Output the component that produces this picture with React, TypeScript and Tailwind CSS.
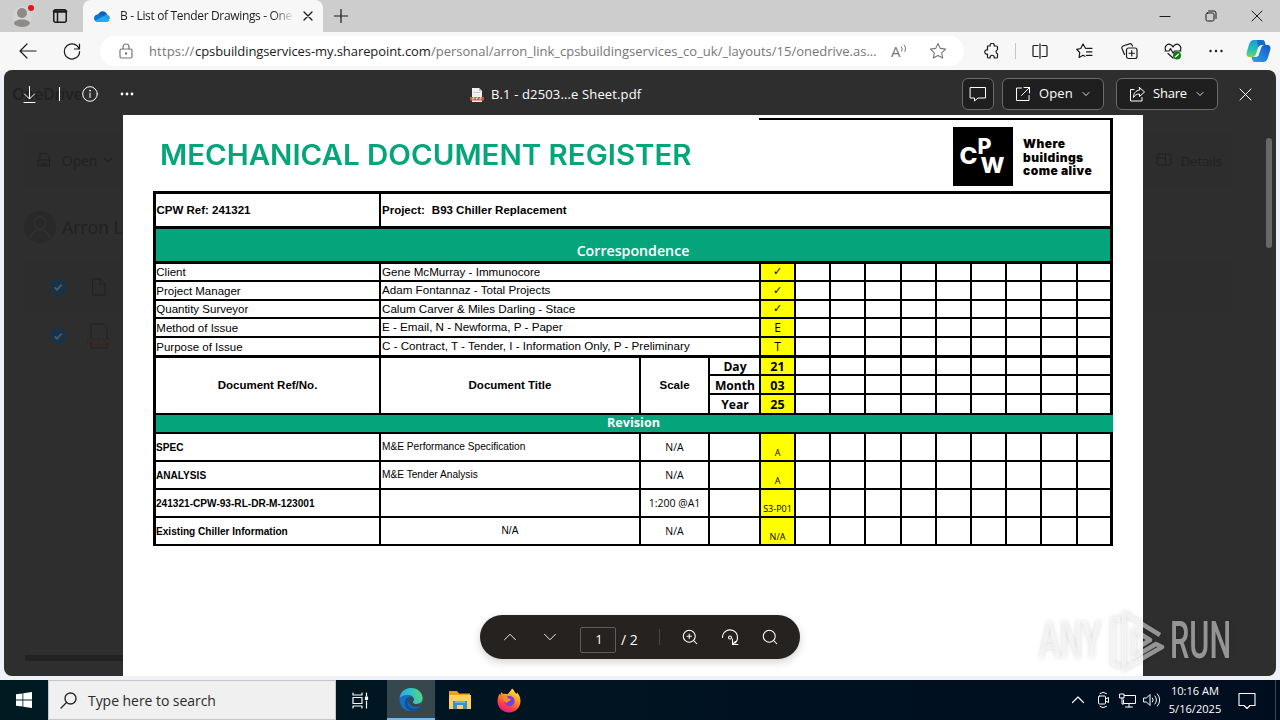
import type { ReactNode } from 'react';
import { ChevronDown, ChevronUp, Search, ZoomIn } from 'lucide-react';

type IconProps = {
  w?: number;
  h?: number;
  sw?: number;
  className?: string;
  children: ReactNode;
};

// Line icon on a viewBox equal to its pixel size
function Icon({ w = 16, h = 16, sw = 1, className = '', children }: IconProps) {
  return (
    <svg
      width={w}
      height={h}
      viewBox={`0 0 ${w} ${h}`}
      fill="none"
      stroke="currentColor"
      strokeWidth={sw}
      strokeLinecap="round"
      strokeLinejoin="round"
      className={`shrink-0 ${className}`}
    >
      {children}
    </svg>
  );
}

function TitleBar() {
  return (
    <div className="flex h-8 shrink-0 bg-[#cdcdcd] text-[#1b1b1b]">
      <div className="flex w-[83px] items-center rounded-br-md">
        <svg width="24" height="24" viewBox="0 0 24 24" className="ml-3 shrink-0">
          <circle cx="10" cy="12" r="9.5" fill="#d6d3d1" />
          <circle cx="10" cy="9" r="5" fill="#8d8a88" />
          <path d="M2 20c0-3 3-4.500 8-4.500s8 1.500 8 4.500c-2 2-5 3-8 3s-6-1-8-3z" fill="#8d8a88" />
          <circle cx="19" cy="4" r="3" fill="#e3141a" />
        </svg>
        <Icon w={16} h={16} sw={1.5} className="ml-4">
          <rect x="1.750" y="1.750" width="12.500" height="12.500" rx="2" />
          <path d="M2 3.500h12" strokeWidth="2.500" />
          <path d="M5.500 4v10" />
        </Icon>
      </div>
      <div className="flex w-[240px] items-center rounded-t-lg bg-[#f7f7f7]">
        <svg width="16" height="11" viewBox="0 0 16 11" className="ml-[11px] shrink-0">
          <path d="M4 3.500C5 1.500 6.500.200 8.500.200c2.300 0 4.200 1.500 4.800 3.600L8 7z" fill="#0f5fb5" />
          <path d="M4 3.300C1.600 3.600 0 5.300 0 7.300 0 9.300 1.600 11 3.800 11L10 5.500C8.500 4 6.500 3 4 3.300z" fill="#1173cf" />
          <path d="M9.500 5.200C10.500 4 12 3.500 13.300 3.800 15 4.300 16 5.800 16 7.500l-3 3z" fill="#2a9be8" />
          <path d="M1 9.800 9.300 5.300 15.600 9.300C15 10.400 14 11 12.800 11H3.800C2.700 11 1.700 10.600 1 9.800z" fill="#29a8ee" />
        </svg>
        <div className="ml-2.5 w-[174px] bg-linear-to-r from-[#1b1b1b] from-88% to-transparent to-100% bg-clip-text text-[12px] tracking-[-0.34px] whitespace-nowrap text-transparent">
          B - List of Tender Drawings - One
        </div>
        <Icon w={10} h={10} sw={1.3} className="ml-[9px]">
          <path d="M1 1l8 8M9 1l-8 8" />
        </Icon>
      </div>
      <Icon w={14} h={14} sw={1.2} className="mt-[9px] ml-[11px]">
        <path d="M7 .5v13M.5 7h13" />
      </Icon>
      <div className="ml-auto flex items-center pr-[17px]">
        <Icon w={12} h={12} className="mr-[34px]">
          <path d="M1 6.500h10" />
        </Icon>
        <Icon w={12} h={12} className="mr-[34px]">
          <rect x="1" y="3" width="8" height="8" rx="1.500" />
          <path d="M3.500 1H9a2 2 0 0 1 2 2v5.500" />
        </Icon>
        <Icon w={12} h={12}>
          <path d="M1 1l10 10M11 1L1 11" />
        </Icon>
      </div>
    </div>
  );
}

function AddressBar() {
  return (
    <div className="flex h-[38px] shrink-0 items-center bg-[#f7f7f7] text-[#1b1b1b]">
      <Icon w={18} h={16} sw={1.2} className="ml-[19px]">
        <path d="M1 8h16M8 1L1 8l7 7" />
      </Icon>
      <Icon w={18} h={18} sw={1.2} className="ml-[26px]">
        <path d="M16.200 7A7.600 7.600 0 1 0 16.600 9.500M16.500 2v5h-5" />
      </Icon>
      <div className="ml-[19px] flex h-[30px] w-[864px] items-center rounded-full bg-white text-[13px] whitespace-nowrap text-[#767676]">
        <Icon w={14} h={16} sw={1.2} className="ml-[19px]">
          <rect x="1" y="6" width="12" height="9" rx="1.500" />
          <path d="M4 6V4a3 3 0 0 1 6 0v2" />
          <circle cx="7" cy="10.500" r=".6" fill="currentColor" />
        </Icon>
        <span className="mt-0.5 ml-[16px] w-[46px] tracking-[0.15px]">https://</span>
        <span className="mt-0.5 w-[236px] tracking-[-0.08px] text-[#1b1b1b]">cpsbuildingservices-my.sharepoint.com</span>
        <span className="mt-0.5 w-[446px]">/personal/arron_link_cpsbuildingservices_co_uk/_layouts/15/onedrive.as...</span>
        <span className="relative ml-[14px] w-[16px] text-[15px]">
          A
          <svg width="8" height="9" viewBox="0 0 8 9" className="absolute top-1 left-[9px]" fill="none" stroke="currentColor">
            <path d="M1 2.500q2 2 .5 5M4 .8q3 3 .8 7" />
          </svg>
        </span>
        <Icon w={18} h={18} sw={1.1} className="ml-[22px]">
          <path d="M9 1.500l2.300 4.900 5.300.700-3.900 3.700 1 5.300L9 13.500l-4.700 2.600 1-5.300L1.400 7.100l5.300-.7z" />
        </Icon>
      </div>
      <Icon w={17} h={17} sw={1.2} className="ml-5">
        <path d="M3.500 3H6.200a2.100 2.100 0 1 1 4 0H12.500a1 1 0 0 1 1 1v2.800a2.100 2.100 0 0 0 0 4V14a1 1 0 0 1-1 1h-2.300a2.100 2.100 0 1 0-4 0H4.500a1 1 0 0 1-1-1v-3a2.100 2.100 0 1 1 0-4z" />
      </Icon>
      <div className="ml-[14px] h-4 w-px bg-[#c6c6c6]" />
      <Icon w={16} h={16} sw={1.2} className="ml-4">
        <path d="M6 2.500H2a1 1 0 0 0-1 1v9a1 1 0 0 0 1 1h4M10 2.500h4a1 1 0 0 1 1 1v9a1 1 0 0 1-1 1h-4M8 .8v14.500" />
      </Icon>
      <Icon w={17} h={16} sw={1.2} className="ml-7">
        <path d="M10 5.300h-.5L7 1 4.700 5.500l-4 .8 3 3.200-.6 5L7 12.300l2 1M11 5.300h5M10.500 8.800H16M10.500 12.300H16" />
      </Icon>
      <Icon w={17} h={17} sw={1.2} className="ml-7">
        <rect x="5.500" y="5" width="10.500" height="10.500" rx="2" />
        <path d="M10.750 7.500v5.500M8 10.250h5.500M3.500 11.500 1 5.500A2 2 0 0 1 2 3L8.500.900A2 2 0 0 1 11 2l.5 1" />
      </Icon>
      <Icon w={18} h={17} sw={1.2} className="ml-[26px]">
        <path d="M9 4C7.500 1 4.500.500 2.800 2 1 3.500.900 6 2 7.800M9 4c1.500-3 4.500-3.500 6.200-2C17 3.500 17.100 6 16 7.800M1 8h4l1.500-2.500L9 10l1.500-2H17M4 10.500l5 4.500" />
        <circle cx="13" cy="12.500" r="4" fill="#107c10" stroke="none" />
        <path d="M11.500 13.800l3-2.600" stroke="#fff" />
      </Icon>
      <Icon w={16} h={4} className="ml-[26px]">
        <g fill="currentColor" stroke="none">
          <circle cx="2.500" cy="2" r="1.200" />
          <circle cx="8" cy="2" r="1.200" />
          <circle cx="13.500" cy="2" r="1.200" />
        </g>
      </Icon>
      <svg width="25" height="24" viewBox="0 0 25 24" className="ml-[22px] shrink-0">
        <defs>
          <linearGradient id="cpA" x1="0" y1="0" x2="0" y2="1">
            <stop offset="0" stopColor="#1a9bd8" />
            <stop offset=".6" stopColor="#27c3b0" />
            <stop offset="1" stopColor="#7ad35e" />
          </linearGradient>
          <linearGradient id="cpB" x1="1" y1="0" x2="0" y2="1">
            <stop offset="0" stopColor="#1457c8" />
            <stop offset="1" stopColor="#2aa4f0" />
          </linearGradient>
        </defs>
        <path d="M8 1h8c2 0 2.500 1 3 3l.5 2h-4c-2 0-3 1-3.500 3l-2 6c-.6 2-1.500 3-3.500 3H4c-3 0-4-2-3.200-5L3 5.500C4 2.500 5.500 1 8 1z" fill="url(#cpA)" />
        <path d="M11 1h5c2 0 2.500 1 3 3l.5 2h-4c-2 0-3 1-3.400 2.500z" fill="#1769d2" />
        <path d="M17 23H9c-2 0-2.500-1-3-3l-.4-2h4c2 0 3-1 3.500-3l2-6c.6-2 1.500-3 3.500-3H21c3 0 4 2 3.200 5L22 18.500C21 21.500 19.500 23 17 23z" fill="url(#cpB)" />
      </svg>
    </div>
  );
}

// OneDrive page dimmed behind the viewer
function DimmedPage() {
  return (
    <div className="absolute inset-0 flex flex-col text-[#212121]">
      <div className="flex h-[47px] items-center pl-2 text-[16px] font-semibold tracking-[-0.3px]">OneDrive</div>
      <div className="mr-[43px] ml-5 mt-[15px] flex h-[56px] items-center rounded-lg bg-[#2d2d2d] text-[14px] tracking-[-0.2px]">
        <Icon w={16} h={16} className="ml-[13px]">
          <path d="M3 6V1.500h6l3.500 3.500V8M1.500 8h11v6h-11zM4 11h6M4 13h6" />
        </Icon>
        <span className="ml-[9px]">Open</span>
        <ChevronDown size={14} className="ml-1" />
        <Icon w={16} h={16} className="ml-auto">
          <rect x="1" y="2" width="14" height="11" rx="2" />
          <path d="M9.500 2v11M1 6h8.500" />
        </Icon>
        <span className="mr-[11px] ml-2 pt-0.5 text-[13.500px]">Details</span>
      </div>
      <div className="mt-[21px] flex h-9 items-center pl-5">
        <div className="flex size-8 justify-center overflow-hidden rounded-full bg-[#292929]">
          <svg width="24" height="32" viewBox="0 0 24 32" fill="none" stroke="#313131" strokeWidth="1.500">
            <circle cx="12" cy="12" r="6" />
            <path d="M2 28c1-7 5-9 10-9s9 2 10 9" />
          </svg>
        </div>
        <span className="ml-[6px] text-[18px] tracking-[-0.2px]">Arron Link</span>
      </div>
      <div className="mr-[43px] ml-5 mt-[17px] flex h-[49px] items-center bg-[#2d2d2d]">
        <CheckDot />
        <Icon w={16} h={18} className="ml-[25px]">
          <path d="M2 1h7l5 5v11H2zM9 1v5h5" />
        </Icon>
      </div>
      <div className="mr-[43px] ml-5 flex h-[49px] items-center">
        <CheckDot />
        <Icon w={24} h={26} className="ml-[21px]">
          <path d="M4 16V1h12l4 4v11M4 20v5h16v-5" strokeDasharray="2 1" />
          <path d="M1 16h22v6H1zM5 20v-2h2M11 20v-2h2M17 20v-2h2" stroke="#3d201f" />
        </Icon>
      </div>
      <div className="mt-auto mb-[15px] ml-[21px] h-1.5 w-[600px] bg-[#222222]" />
    </div>
  );
}

function CheckDot() {
  return (
    <svg width="16" height="16" viewBox="0 0 16 16" className="ml-[26px] shrink-0">
      <circle cx="8" cy="8" r="8" fill="#17334a" />
      <path d="M4.500 8.300l2.500 2.400 4.700-5" fill="none" stroke="#55595c" strokeWidth="1.800" />
    </svg>
  );
}

function ViewerHeader() {
  return (
    <div className="relative flex h-[45px] shrink-0 items-center text-white">
      <Icon w={13} h={17} className="mt-[3px] ml-[19px]">
        <path d="M6.500 .5v12M1.500 8l5 5 5-5M1 16.500h11" />
      </Icon>
      <div className="mt-0.5 ml-[23px] h-3.5 w-px bg-white" />
      <Icon w={16} h={16} className="mt-0.5 ml-[22px]">
        <circle cx="8" cy="8" r="7.300" />
        <path d="M8 7v4.500" />
        <circle cx="8" cy="4.700" r=".4" fill="currentColor" />
      </Icon>
      <Icon w={14} h={4} className="mt-0.5 ml-[22px]">
        <g fill="currentColor" stroke="none">
          <circle cx="2" cy="2" r="1.400" />
          <circle cx="7" cy="2" r="1.400" />
          <circle cx="12" cy="2" r="1.400" />
        </g>
      </Icon>
      <div className="ml-[336px] flex items-center pt-1">
        <svg width="14" height="16" viewBox="0 0 14 16" className="shrink-0">
          <path d="M2 1h7l3 3v11H2z" fill="#f1f1f1" />
          <path d="M9 1l3 3H9z" fill="#bdbdbd" />
          <path d="M3.500 5.500h7" stroke="#c9c9c9" />
          <rect y="10" width="14" height="3.500" fill="#c8553c" />
          <path d="M3 12.500v-1.500h1.500M6.500 12.500v-1.500H8M10 12.500v-1.500h1.500" stroke="#fff" fill="none" />
        </svg>
        <span className="ml-[7px] text-[13px] tracking-[0.14px] whitespace-nowrap">B.1 - d2503...e Sheet.pdf</span>
      </div>
      <div className="ml-auto flex items-center pt-[3px]">
        <button className="flex h-8 w-8 items-center justify-center rounded-md border border-[#6b6b6b] bg-[#1f1f1f]">
          <Icon w={18} h={16}>
            <path d="M1.500 1.500h15v10.500H9l-3.500 3v-3h-4z" />
          </Icon>
        </button>
        <button className="ml-2 flex h-8 w-[102px] items-center rounded-md border border-[#6b6b6b] bg-[#1f1f1f] pl-3">
          <Icon w={16} h={16}>
            <path d="M6.500 2H1.500v12.500H14V9.500M9 1.500h5.500V7M14.500 1.500L6.500 9.500" />
          </Icon>
          <span className="ml-2 text-[13px] tracking-[0.1px]">Open</span>
          <ChevronDown size={12} strokeWidth={1.700} className="ml-[7px]" />
        </button>
        <button className="ml-3 flex h-8 w-[102px] items-center rounded-md border border-[#6b6b6b] bg-[#1f1f1f] pl-3">
          <Icon w={17} h={16}>
            <path d="M5 3.500H1.500v11.500H13v-3.500M10.500 1.500l5 4.500-5 4.500V8C7.500 8 6 9 4.500 11.500 4.500 7.500 6.500 4.500 10.500 4z" />
          </Icon>
          <span className="ml-[7px] text-[13px] tracking-[-0.2px]">Share</span>
          <ChevronDown size={12} strokeWidth={1.700} className="ml-[7px]" />
        </button>
        <Icon w={13} h={13} className="mr-[24px] ml-[21px]">
          <path d="M1 1l11 11M12 1L1 12" />
        </Icon>
      </div>
    </div>
  );
}

const people = [
  ['Client', 'Gene McMurray - Immunocore', '✓'],
  ['Project Manager', 'Adam Fontannaz - Total Projects', '✓'],
  ['Quantity Surveyor', 'Calum Carver & Miles Darling - Stace', '✓'],
  ['Method of Issue', 'E - Email, N - Newforma, P - Paper', 'E'],
  ['Purpose of Issue', 'C - Contract, T - Tender, I - Information Only, P - Preliminary', 'T'],
];

const dates = [
  ['Day', '21'],
  ['Month', '03'],
  ['Year', '25'],
];

const docs = [
  { ref: 'SPEC', title: 'M&E Performance Specification', scale: 'N/A', rev: 'A' },
  { ref: 'ANALYSIS', title: 'M&E Tender Analysis', scale: 'N/A', rev: 'A' },
  { ref: '241321-CPW-93-RL-DR-M-123001', title: '', scale: '1:200 @A1', rev: 'S3-P01' },
  { ref: 'Existing Chiller Information', title: 'N/A', scale: 'N/A', rev: 'N/A', center: true },
];

const blanks = [0, 1, 2, 3, 4, 5, 6, 7, 8];

function Cell({ className = '', children }: { className?: string; children?: ReactNode }) {
  return (
    <div className={`flex items-center border-r-2 border-b-2 border-black whitespace-nowrap ${className}`}>
      {children}
    </div>
  );
}

function BlankCells({ className = '' }: { className?: string }) {
  return (
    <>
      {blanks.map((i) => (
        <Cell key={i} className={`${i === 8 ? 'border-r-3' : ''} ${className}`} />
      ))}
    </>
  );
}

function Register() {
  return (
    <div className="ml-[30px] grid w-[960px] grid-cols-[225px_260px_69px_51px_35px_35px_35px_36px_35px_35px_35px_35px_36px_35px] grid-rows-[35px_35px_18px_19px_18px_19px_20px_18px_19px_20px_19px_28px_28px_28px_28px] border-t-3 border-l-3 border-black font-['Liberation_Sans'] text-[11.5px] leading-[14px] text-black">
      <Cell className="border-b-3 pl-[0.5px] font-bold">CPW Ref: 241321</Cell>
      <Cell className="col-span-13 border-r-3 border-b-3 pl-px font-bold">
        <span>Project:</span>
        <span className="ml-[7px]">B93 Chiller Replacement</span>
      </Cell>

      <div className="col-span-14 flex items-end justify-center border-r-3 border-b-3 border-black bg-[#05a57b] font-['Open_Sans'] text-[14.2px] leading-[21px] font-semibold text-white">
        Correspondence
      </div>

      {people.map(([role, name, mark], i) => {
        const last = i === people.length - 1 ? 'border-b-3' : '';
        const check = mark === '✓' ? 'pb-0.5 text-[11px]' : 'pt-px text-[12px]';
        return [
          <Cell key={`${role}-r`} className={`pl-[0.3px] ${last}`}>{role}</Cell>,
          <Cell key={`${role}-n`} className={`col-span-3 pb-px pl-px text-[11.64px] ${last}`}>{name}</Cell>,
          <Cell key={`${role}-m`} className={`justify-center bg-[#ffff00] font-['Open_Sans','DejaVu_Sans'] ${check} ${last}`}>{mark}</Cell>,
          <BlankCells key={`${role}-b`} className={last} />,
        ];
      })}

      <Cell className="row-span-3 justify-center pb-0.5 font-bold">Document Ref/No.</Cell>
      <Cell className="row-span-3 justify-center pb-0.5 font-bold">Document Title</Cell>
      <Cell className="row-span-3 justify-center pb-0.5 font-bold">Scale</Cell>
      {dates.map(([label, value]) => [
        <Cell key={`${label}-l`} className="justify-center pt-0.5 pl-px font-['Open_Sans'] text-[12.1px] font-bold">{label}</Cell>,
        <Cell key={`${label}-v`} className="justify-center bg-[#ffff00] pt-0.5 font-['Open_Sans'] text-[12.5px] font-bold">{value}</Cell>,
        <BlankCells key={`${label}-b`} />,
      ])}

      <div className="col-span-14 flex items-center justify-center border-b-2 border-black bg-[#05a57b] pr-0.5 pb-0.5 font-['Open_Sans'] text-[12.6px] leading-[17px] font-bold text-white">
        Revision
      </div>

      {docs.map((d) => [
        <Cell key={`${d.ref}-r`} className="pt-0.5 text-[10.1px] font-bold">{d.ref}</Cell>,
        <Cell key={`${d.ref}-t`} className={`text-[10.16px] ${d.center ? 'justify-center' : 'pl-px'}`}>{d.title}</Cell>,
        <Cell key={`${d.ref}-s`} className="justify-center pb-px font-['Open_Sans'] text-[10.5px]">{d.scale}</Cell>,
        <Cell key={`${d.ref}-x`} />,
        <Cell key={`${d.ref}-v`} className="items-end! justify-center bg-[#ffff00] font-['Open_Sans'] text-[9px]">{d.rev}</Cell>,
        <BlankCells key={`${d.ref}-b`} />,
      ])}
    </div>
  );
}

function PdfPage() {
  return (
    <div className="ml-[119px] flex h-[561px] w-[1020px] flex-col bg-white">
      <div className="flex h-[76px] shrink-0 pt-[3px] pl-[37px]">
        <h1 className="w-[599px] pt-[17px] font-['Inter'] text-[28px] leading-[40px] font-semibold whitespace-nowrap text-[#05a57b]">
          <span className="inline-block origin-left scale-x-[1.052]">MECHANICAL DOCUMENT REGISTER</span>
        </h1>
        <div className="flex w-[354px] justify-end border-t-2 border-r-3 border-black pt-[7px]">
          <svg width="60" height="59" viewBox="0 0 60 59" fill="#fff" fontWeight="800" className="shrink-0 bg-black font-['Inter']">
            <text x="6.500" y="37" fontSize="23" textLength="18" lengthAdjust="spacingAndGlyphs">C</text>
            <text x="24.500" y="26.500" fontSize="21.500">P</text>
            <text x="27.500" y="46" fontSize="21.500" textLength="24" lengthAdjust="spacingAndGlyphs">W</text>
          </svg>
          <div className="mt-[10px] mr-[7px] ml-[10px] w-[80px] font-['Inter'] text-[12px] leading-[13.500px] font-black tracking-[0.45px] whitespace-nowrap text-black">
            Where
            <br />
            buildings
            <br />
            come alive
          </div>
        </div>
      </div>
      <Register />
    </div>
  );
}

function PageControls() {
  return (
    <div className="absolute bottom-[17px] left-[476px] flex h-11 w-80 items-center rounded-full bg-[#252220] text-white shadow-[0_3px_8px_rgba(0,0,0,0.18)]">
      <ChevronUp size={22} strokeWidth={1} className="ml-[19px]" />
      <ChevronDown size={22} strokeWidth={1} className="ml-[18px]" />
      <div className="mt-[6px] ml-[19px] flex h-[26px] w-9 items-center justify-center rounded-xs border border-[#605e5c] pl-0.5 text-[13px]">1</div>
      <span className="mt-[5px] ml-[5px] w-5 text-[14px] whitespace-nowrap">/ 2</span>
      <div className="ml-[18px] h-4 w-px bg-[#484644]" />
      <ZoomIn size={18} strokeWidth={1.400} className="ml-[21px]" />
      <Icon w={18} h={18} sw={1.1} className="ml-[22px]">
        <path d="M1.500 9.500a7.500 7.500 0 1 1 12.500 5.500M11.500 11v5.500h5.500M11.500 16.500l3-3" />
        <circle cx="9" cy="9.500" r="1.500" />
      </Icon>
      <Search size={18} strokeWidth={1.400} className="ml-[22px]" />
    </div>
  );
}

function Watermark() {
  return (
    <div className="pointer-events-none absolute top-[610px] left-[1039px] flex h-[62px] w-[194px] items-center font-['Roboto'] text-[52px] leading-none font-medium text-white/50 drop-shadow-[0_0_2px_rgba(0,0,0,0.3)]">
      <div className="w-[63px]">
        <span className="inline-block origin-left scale-x-[0.61]">ANY</span>
      </div>
      <svg width="58" height="62" viewBox="0 0 58 62" className="ml-2 shrink-0" fill="none" stroke="currentColor" strokeWidth="4.500" strokeLinejoin="round">
        <path d="M10 9H3v44l7 4" />
        <path d="M50 25L14 3v56l38-22-6-3-22 13V20l16 10-8 5" />
      </svg>
      <div className="ml-[2px] w-[60px]">
        <span className="inline-block origin-left scale-x-[0.59]">RUN</span>
      </div>
    </div>
  );
}

function Taskbar() {
  return (
    <div className="flex h-10 shrink-0 items-center bg-linear-to-r from-[#001a22] to-[#000d20] text-white">
      <svg width="16" height="16" viewBox="0 0 16 16" fill="#fff" className="ml-4 shrink-0">
        <path d="M0 2.300l6.500-.9v6.200H0zM7.300 1.300L16 0v7.600H7.300zM0 8.400h6.500v6.200L0 13.700zM7.300 8.400H16V16l-8.700-1.200z" />
      </svg>
      <div className="ml-4 flex h-10 w-72 items-center border border-[#c6c6c6] bg-[#f0f0f0] text-[#2b2b2b]">
        <Icon w={17} h={17} sw={1.4} className="ml-[11px]">
          <circle cx="10.500" cy="6.500" r="5.500" />
          <path d="M6.500 10.500L1 16" />
        </Icon>
        <span className="ml-[11px] text-[14px] tracking-[-0.05px]">Type here to search</span>
      </div>
      <Icon w={17} h={17} sw={1.2} className="ml-4">
        <path d="M1 1v2h9V1M1 5.500h9v6H1zM1 16v-2h9v2M14.500 1v3M14.500 9v7" />
        <rect x="13.500" y="5" width="2" height="2.500" fill="currentColor" />
      </Icon>
      <div className="ml-[18px] flex h-10 w-12 items-center justify-center border-b-2 border-[#76b9ed] bg-[#36474e]">
        <svg width="24" height="25" viewBox="0 0 24 25">
          <defs>
            <linearGradient id="edgeTop" x1="0" y1="0.500" x2="1" y2="0.300">
              <stop offset="0" stopColor="#2aa9e0" />
              <stop offset=".5" stopColor="#2fc3c8" />
              <stop offset="1" stopColor="#5fd46a" />
            </linearGradient>
          </defs>
          <circle cx="12" cy="12.500" r="11.500" fill="#1470c4" />
          <path d="M.6 11C1.500 4.500 6.500 1 12 1c7 0 11.600 5 11.600 10 0 4-3 6-6 6-2.500 0-3.900-1-3.900-1.800s1.100-1.200 1.100-3C14.800 9.500 12 8 8.500 8 4.500 8 1.500 9.500.6 11z" fill="url(#edgeTop)" />
          <path d="M8.500 15c-.3 4 3.500 6.500 7.500 6.500 2.500 0 4.800-.8 6-2-1.800 3-5 4.500-9 4.500-4.500-.5-7.500-4-7-8.500.3-3.500 2.500-5.500 5-6.200-1.500 1.200-2.300 3-2.500 5.700z" fill="#0d4f9a" />
          <path d="M9 13.500c.3-2 1.500-3.700 3.200-4 1.800.3 2.600 1.500 2.600 2.700 0 1.800-1.100 2.200-1.100 3 0 1 1.800 1.800 3.900 1.800 2.400 0 4-.9 5.200-2-.3 2-.9 3.200-1.500 4.300-5.300 2.200-12 .2-12.300-5.800z" fill="#36474e" />
        </svg>
      </div>
      <svg width="22" height="20" viewBox="0 0 22 20" className="ml-[14px] shrink-0">
        <path d="M0 1h8l2 2.500h11V7H0z" fill="#e8a31c" />
        <path d="M0 5h22v14H0z" fill="#fbd25c" />
        <path d="M4 19v-8h14v8h-4v-4H8v4z" fill="#3a8fd0" />
        <path d="M6 11h10v2H6z" fill="#67b4e8" />
      </svg>
      <svg width="24" height="25" viewBox="0 0 24 25" className="ml-[26px] shrink-0">
        <defs>
          <linearGradient id="fox" x1="0.800" y1="0" x2="0.300" y2="1">
            <stop offset="0" stopColor="#fff23a" />
            <stop offset=".4" stopColor="#ff9a1e" />
            <stop offset=".75" stopColor="#ff3d45" />
            <stop offset="1" stopColor="#e31587" />
          </linearGradient>
        </defs>
        <path d="M15 .5c2 1.500 2.500 3 3 4l1.500 1.500.5-1.500C22.500 7 23.500 10 23.500 13c0 6.500-5 11.500-11.500 11.500S.5 19.500.5 13c0-3 1-5.500 2.300-7.500L3 7.500 4.500 4 6 6c1.500-.5 3-.3 4.500.3C11.500 5 13.500 3.500 15 .5z" fill="url(#fox)" />
        <circle cx="12.500" cy="13" r="5.200" fill="#7542e0" />
        <path d="M6 9c2-1 4-.5 5.500 1.500 1.500.3 2.500.8 2 1.800s-3 1-3.500 2.700C7.500 14.500 6 12 6 9z" fill="#ff8a1e" />
      </svg>
      <div className="ml-auto flex items-center">
        <Icon w={14} h={8} sw={1.2}>
          <path d="M1.500 6.500L7 1l5.500 5.500" />
        </Icon>
        <Icon w={13} h={18} className="ml-3">
          <rect x="1.500" y="5" width="7" height="8" rx="1" />
          <path d="M8.500 8l3-1.500v5l-3-1.500M3 2.500Q6 0 9.500 2.500M3 15.500Q6 18 9.500 15.500" />
        </Icon>
        <Icon w={17} h={15} className="ml-[9px]">
          <path d="M5.500 2.500h11v8h-12V7M10 10.500v3.500M6.500 14h7M1 1h4v4H1zM3 5v6h1.500" />
        </Icon>
        <Icon w={18} h={14} className="ml-[7px]">
          <path d="M1 5h2.500L7 1.500v11L3.500 9H1zM9.500 5q1.500 2 0 4M12 3q3 4 0 8M14.500 1q4.500 6 0 12" />
        </Icon>
        <div className="ml-[7px] w-[54px] text-center text-[11.100px] leading-[18px] whitespace-nowrap">
          <div>10:16 AM</div>
          <div>5/16/2025</div>
        </div>
        <Icon w={18} h={17} sw={1.1} className="ml-4">
          <path d="M1 1.500h16v12h-5l-3 3-3-3H1z" />
        </Icon>
        <div className="mr-1 ml-[19px] h-10 w-px bg-[#3c4653]" />
      </div>
    </div>
  );
}

export default function App() {
  return (
    <div className="relative flex h-[720px] w-[1280px] flex-col overflow-hidden bg-[#eef1f5] font-['Open_Sans',sans-serif]">
      <TitleBar />
      <AddressBar />
      <main className="relative mx-1 mb-1 flex h-[606px] flex-col overflow-hidden rounded-lg bg-[#2e2e2e]">
        <DimmedPage />
        <ViewerHeader />
        <div className="relative flex">
          <PdfPage />
          <div className="mt-[23px] ml-auto mr-[4px] h-[110px] w-1.5 rounded-full bg-[#686868]" />
        </div>
        <PageControls />
      </main>
      <Taskbar />
      <Watermark />
    </div>
  );
}
